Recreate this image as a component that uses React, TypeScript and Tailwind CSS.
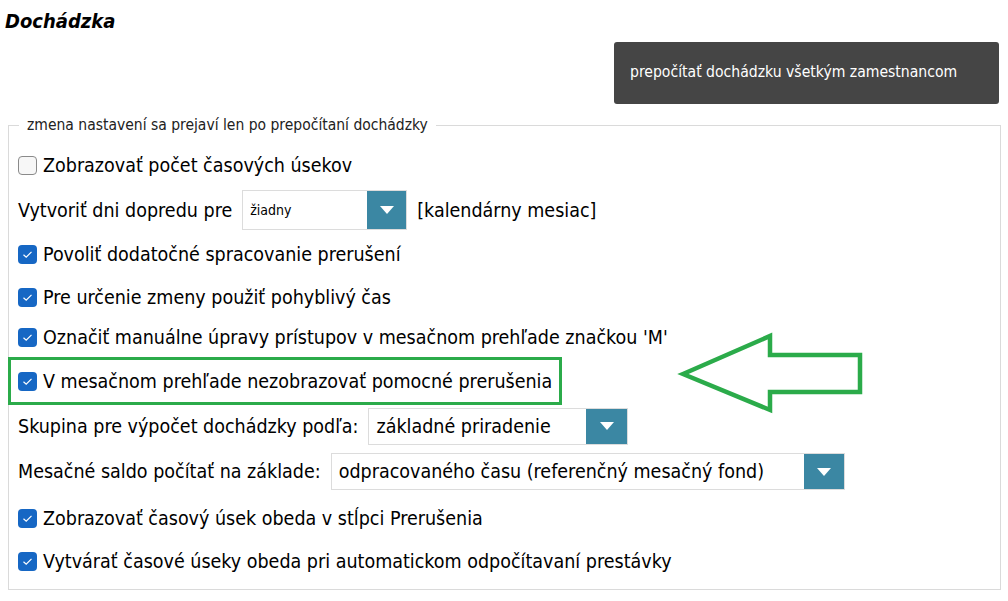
import React from 'react';

const font = { fontFamily: '"DejaVu Sans Condensed", "DejaVu Sans", sans-serif' };

function Check({ checked }: { checked: boolean }) {
  if (!checked) {
    return <span className="inline-block w-[19px] h-[19px] rounded-[4px] border border-[#8a8a8a] bg-[#f7f7f7] shrink-0" />;
  }
  return (
    <span className="inline-flex items-center justify-center w-[19px] h-[19px] rounded-[4px] bg-[#1667c4] shrink-0">
      <svg width="11" height="9" viewBox="0 0 11 9" fill="none">
        <path d="M1.5 4.8 L4.2 7.2 L9.5 1.8" stroke="white" strokeWidth="1.2" />
      </svg>
    </span>
  );
}

function Select({ value, w, h, arrowW, small }: { value: string; w: string; h: string; arrowW: string; small?: boolean }) {
  return (
    <div className={`flex ${w} ${h} border border-[#dcdcdc] bg-white`}>
      <div className={`flex-1 flex items-center pl-[7px] ${small ? 'text-[14px]' : 'text-[19.5px]'}`}>{value}</div>
      <div className={`${arrowW} bg-[#3b87a3] flex items-center justify-center`}>
        <svg width="14" height="8" viewBox="0 0 14 8">
          <path d="M0 0 H14 L7 8 Z" fill="white" />
        </svg>
      </div>
    </div>
  );
}

function CheckRow({ label, checked = true, h }: { label: string; checked?: boolean; h: string }) {
  return (
    <div className={`flex items-center gap-[6px] ${h}`}>
      <Check checked={checked} />
      <span>{label}</span>
    </div>
  );
}

export default function App() {
  return (
    <div className="relative w-[1008px] h-[601px] bg-white text-black overflow-hidden" style={font}>
      <div className="pl-[5px] pt-[6px] h-[42px] text-[20px] font-bold italic">Dochádzka</div>
      <div className="flex justify-end pr-[9px]">
        <button className="w-[385px] h-[62px] rounded-[3px] bg-[#454545] text-white text-[15.6px] text-left pl-[16px]">
          prepočítať dochádzku všetkým zamestnancom
        </button>
      </div>

      <fieldset className="ml-[8px] mt-[10px] w-[993px] border border-[#dadada] pl-[9px] pr-[10px] pt-[6px] pb-[8px] text-[19.5px]">
        <legend className="px-[8px] ml-[1px] text-[15.5px] text-[#222]">zmena nastavení sa prejaví len po prepočítaní dochádzky</legend>

        <CheckRow label="Zobrazovať počet časových úsekov" checked={false} h="h-[44px]" />
        <div className="flex items-center h-[46px]">
          <span className="mr-[10px]">Vytvoriť dni dopredu pre</span>
          <Select value="žiadny" w="w-[165px]" h="h-[40px]" arrowW="w-[39px]" small />
          <span className="ml-[10px]">[kalendárny mesiac]</span>
        </div>
        <CheckRow label="Povoliť dodatočné spracovanie prerušení" h="h-[43px]" />
        <CheckRow label="Pre určenie zmeny použiť pohyblivý čas" h="h-[42px]" />
        <CheckRow label="Označiť manuálne úpravy prístupov v mesačnom prehľade značkou 'M'" h="h-[39px]" />
        <div className="-ml-[10px] w-[554px] h-[48px] border-[3px] border-[#2bab4a] flex items-center gap-[6px] pl-[7px]">
          <Check checked />
          <span>V mesačnom prehľade nezobrazovať pomocné prerušenia</span>
        </div>
        <div className="flex items-center h-[42px]">
          <span className="mr-[10px]">Skupina pre výpočet dochádzky podľa:</span>
          <Select value="základné priradenie" w="w-[260px]" h="h-[37px]" arrowW="w-[41px]" />
        </div>
        <div className="flex items-center h-[49px]">
          <span className="mr-[10px]">Mesačné saldo počítať na základe:</span>
          <Select value="odpracovaného času (referenčný mesačný fond)" w="w-[514px]" h="h-[37px]" arrowW="w-[40px]" />
        </div>
        <CheckRow label="Zobrazovať časový úsek obeda v stĺpci Prerušenia" h="h-[45px]" />
        <CheckRow label="Vytvárať časové úseky obeda pri automatickom odpočítavaní prestávky" h="h-[40px]" />
      </fieldset>

      <svg className="absolute left-0 top-0 pointer-events-none" width="1008" height="601">
        <polygon
          points="683,374 770,336 770,355 860,355 860,392 770,392 770,410"
          fill="none"
          stroke="#2bab4a"
          strokeWidth="4.5"
          strokeLinejoin="miter"
        />
      </svg>
    </div>
  );
}
